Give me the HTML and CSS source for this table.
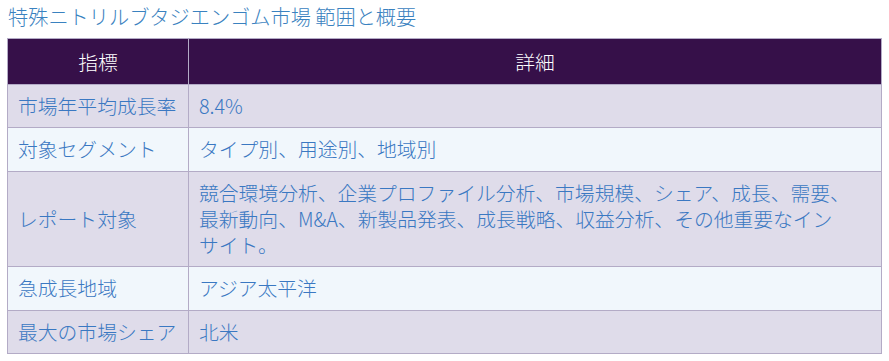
FILE: index.html
```html
<!DOCTYPE html>
<html lang="ja">
<head>
    <meta charset="UTF-8">
    <meta name="viewport" content="width=device-width, initial-scale=1.0">
    <title>特殊ニトリルブタジエンゴム市場 範囲と概要</title>
    <link rel="stylesheet" href="styles.css">
</head>
<body>
    <h2 class="scope-title">特殊ニトリルブタジエンゴム市場 範囲と概要</h2>
    <table class="scope-table">
        <thead>
            <tr>
                <th class="col-key">指標</th>
                <th>詳細</th>
            </tr>
        </thead>
        <tbody>
            <tr>
                <td>市場年平均成長率</td>
                <td>8.4%</td>
            </tr>
            <tr>
                <td>対象セグメント</td>
                <td>タイプ別、用途別、地域別</td>
            </tr>
            <tr>
                <td>レポート対象</td>
                <td>競合環境分析、企業プロファイル分析、市場規模、シェア、成長、需要、<br>最新動向、M&amp;A、新製品発表、成長戦略、収益分析、その他重要なイン<br>サイト。</td>
            </tr>
            <tr>
                <td>急成長地域</td>
                <td>アジア太平洋</td>
            </tr>
            <tr>
                <td>最大の市場シェア</td>
                <td>北米</td>
            </tr>
        </tbody>
    </table>
</body>
</html>
```

FILE: styles.css
```css
body {
    font-family: "Noto Sans CJK JP", "Noto Sans", sans-serif;
    background-color: #ffffff;
    margin: 0;
    padding: 4px 7px 0 7px;
}
.scope-title {
    font-size: 20.2px;
    font-weight: 300;
    color: #3a82c0;
    margin: 0 0 8px 1px;
    line-height: 26px;
}
.scope-table {
    width: 875px;
    border-collapse: collapse;
    border: 1px solid #b3abc6;
    font-size: 19.8px;
    font-weight: 300;
    line-height: 26px;
}
.scope-table th {
    background-color: #361049;
    color: #ffffff;
    font-weight: 300;
    padding: 10px 10px 9px;
    border: 1px solid #b3abc6;
    text-align: center;
}
.scope-table th.col-key {
    width: 160px;
}
.scope-table td {
    color: #3a78c2;
    padding: 8px 10px 8.4px 10px;
    border: 1px solid #b3abc6;
    vertical-align: middle;
}
.scope-table tbody tr:nth-child(odd) td {
    background-color: #dfdcea;
}
.scope-table tbody tr:nth-child(even) td {
    background-color: #f1f7fc;
}
```
